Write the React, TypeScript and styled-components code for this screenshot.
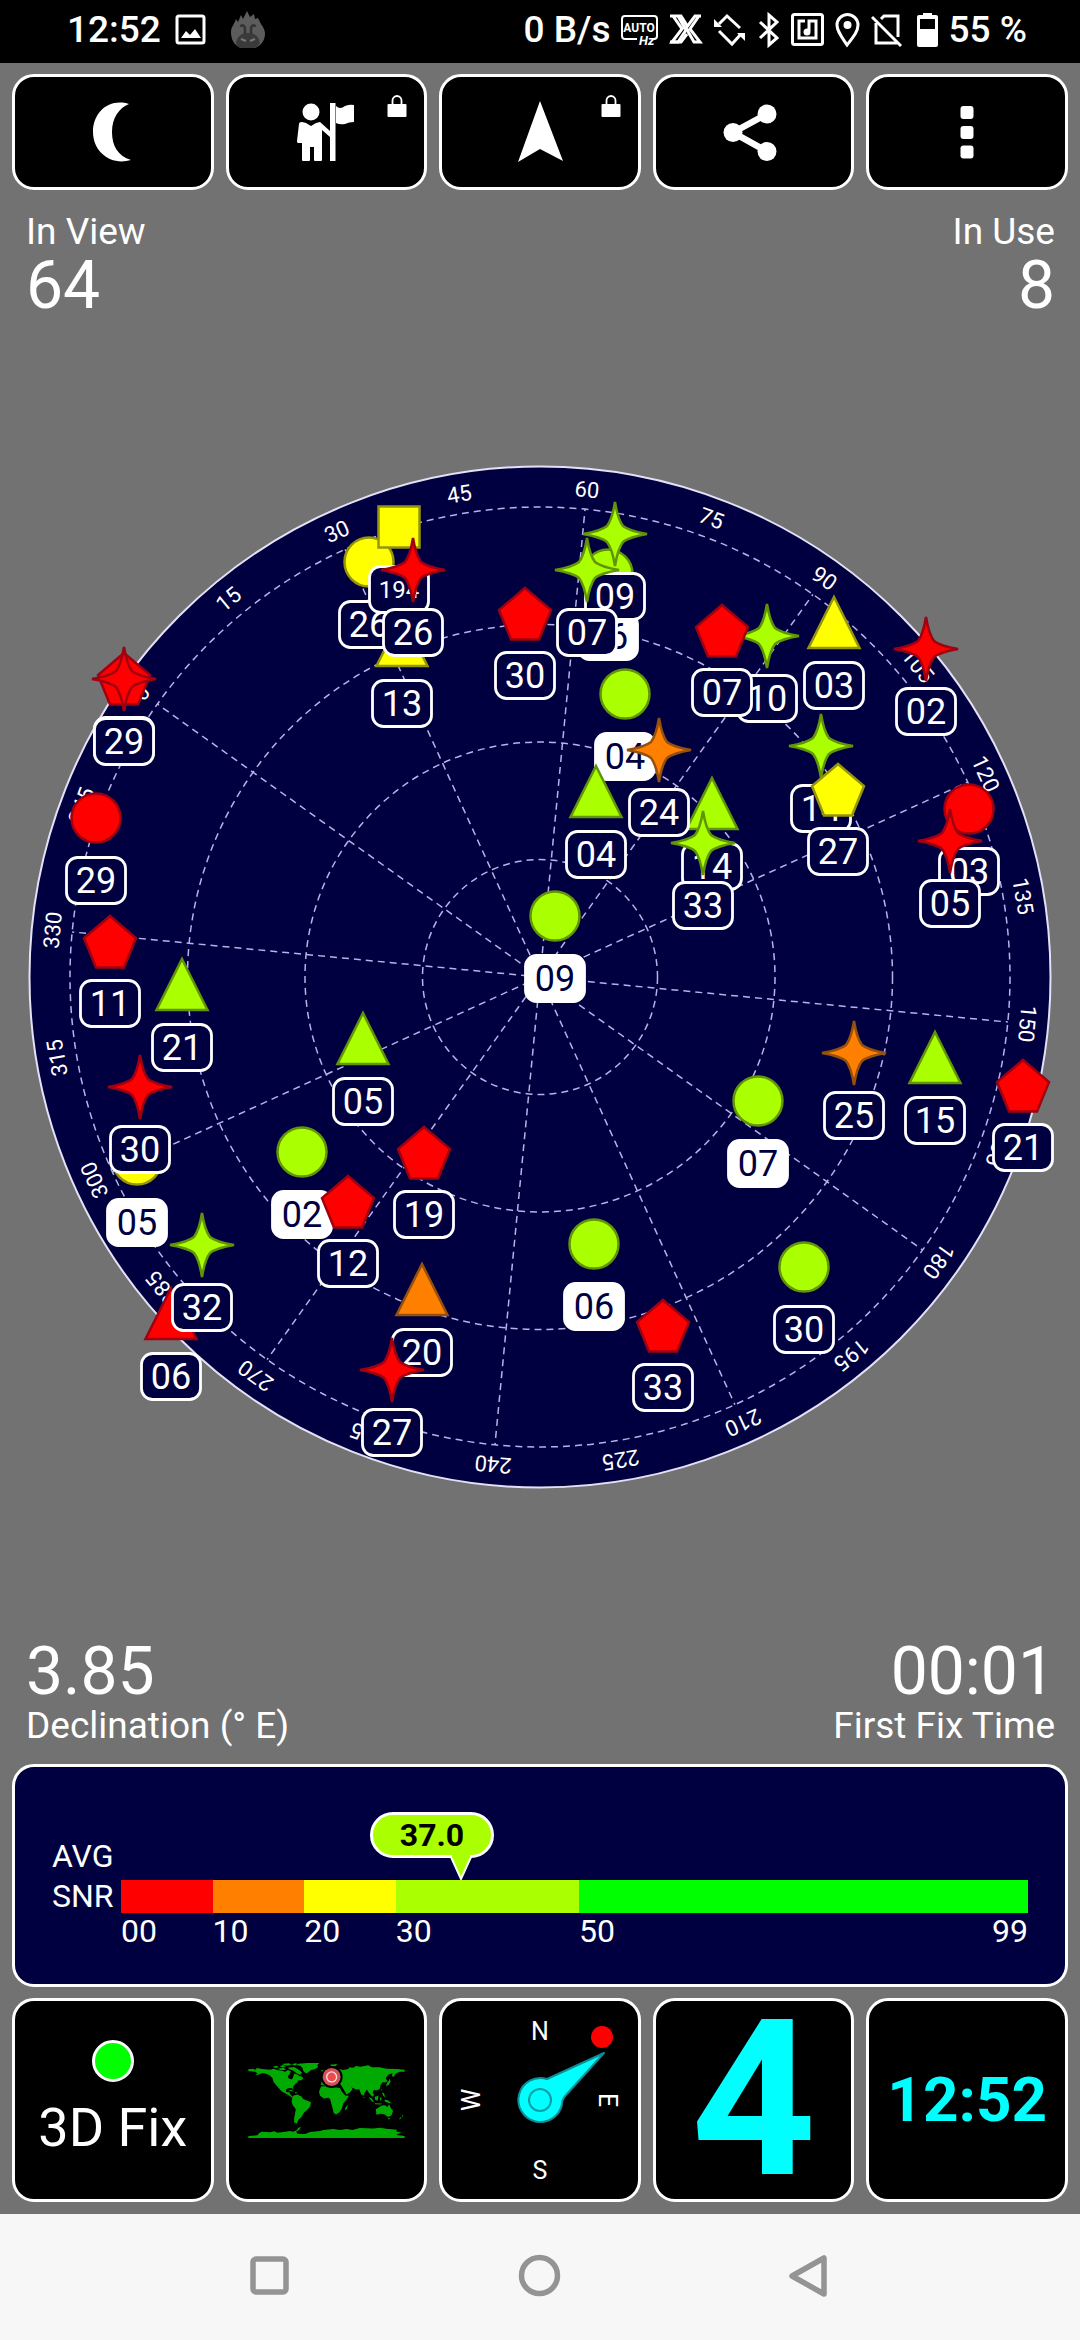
import React from "react";
import styled, { createGlobalStyle } from "styled-components";

const NAVY = "#000040";
const CYAN = "#00ffff";
const FONT = 'Roboto, "Noto Sans", sans-serif';

const GlobalStyle = createGlobalStyle`
  * { box-sizing: border-box; }
  body {
    margin: 0;
    background: #727272;
    color: #fff;
    font-family: ${FONT};
  }
`;

const Screen = styled.div`
  display: flex;
  flex-direction: column;
  min-height: 100vh;
`;

/* ---------- status bar ---------- */

const StatusBar = styled.header`
  display: flex;
  justify-content: space-between;
  align-items: center;
  height: 63px;
  padding: 0 53px 3px 67px;
  background: #000;
  font-size: 37px;
  font-weight: 500;
  line-height: 44px;
`;

const StatusGroup = styled.div<{ $gap: number }>`
  display: flex;
  align-items: center;
  gap: ${(p) => p.$gap}px;
  white-space: nowrap;
`;

const StatusIcon = ({ width, children }: { width: number; children: React.ReactNode }) => (
  <svg width={width} height={38} viewBox={`0 0 ${width} 38`} fill="none" stroke="#fff" strokeWidth={3} aria-hidden="true">
    {children}
  </svg>
);

/* ---------- shared rows and boxes ---------- */

const Main = styled.main`
  flex: 1;
  display: flex;
  flex-direction: column;
  padding: 11px 0 12px;
`;

const FiveColumns = styled.div`
  display: grid;
  grid-template-columns: repeat(5, minmax(0, 1fr));
  gap: 12px;
  padding: 0 12px;
`;

const BoxButton = styled.button<{ $height: number }>`
  position: relative;
  display: flex;
  flex-direction: column;
  align-items: center;
  justify-content: center;
  gap: 14px;
  height: ${(p) => p.$height}px;
  padding: 0;
  border: 3px solid #fff;
  border-radius: 22px;
  background: #000;
  color: #fff;
  font-family: inherit;
  white-space: nowrap;
`;

const LockBadge = styled.svg`
  position: absolute;
  top: 18px;
  right: 17px;
`;

const Lock = () => (
  <LockBadge width={20} height={22} viewBox="0 0 20 22" aria-hidden="true">
    <rect x="0.500" y="9" width="19" height="13" rx="1" fill="#fff" />
    <path d="M5.500 10V5.500a4.500 4.500 0 0 1 9 0V10" fill="none" stroke="#fff" strokeWidth="1.800" />
  </LockBadge>
);

const ToolIcon = ({ children }: { children: React.ReactNode }) => (
  <svg width={64} height={64} viewBox="0 0 64 64" fill="#fff" aria-hidden="true">
    {children}
  </svg>
);

/* ---------- statistics ---------- */

const StatRow = styled.section`
  display: flex;
  justify-content: space-between;
  padding: 20px 25px 16px 26px;
`;

const Stat = styled.div<{ $end?: boolean }>`
  display: flex;
  flex-direction: column;
  text-align: ${(p) => (p.$end ? "right" : "left")};
`;

const StatLabel = styled.span`
  font-size: 37px;
  line-height: 44px;
`;

const StatValue = styled.span`
  font-size: 66px;
  line-height: 64px;
`;

/* ---------- sky plot ---------- */

const SkyArea = styled.section`
  flex: 1;
  display: flex;
  align-items: center;
  justify-content: center;
`;

const SkySvg = styled.svg`
  display: block;
  width: 100%;
  height: auto;
`;

const DashedLine = styled.line`
  stroke: #b8b3e6;
  stroke-width: 1.5;
  stroke-dasharray: 7 5;
`;

const DashedRing = styled.circle`
  fill: none;
  stroke: #b8b3e6;
  stroke-width: 1.5;
  stroke-dasharray: 7 5;
`;

const BearingText = styled.text`
  fill: #fff;
  font-size: 22px;
  text-anchor: middle;
`;

const BadgeText = styled.text<{ $small: boolean; $used: boolean }>`
  fill: ${(p) => (p.$used ? NAVY : "#fff")};
  font-size: ${(p) => (p.$small ? 24 : 36)}px;
  text-anchor: middle;
`;

const CX = 540;
const CY = 977;
const RING = 117.5;
const HEADING = 54.5;

const onDial = (bearing: number, r: number) => {
  const a = ((bearing - HEADING) * Math.PI) / 180;
  return { x: CX + r * Math.sin(a), y: CY - r * Math.cos(a) };
};

type Shape = "circle" | "triangle" | "pentagon" | "star" | "square";
type Tone = "red" | "orange" | "yellow" | "lime";

const TONES: Record<Tone, [string, string]> = {
  red: ["#ff0000", "#a00010"],
  orange: ["#ff8000", "#94500c"],
  yellow: ["#ffff00", "#95950c"],
  lime: ["#aaff00", "#629408"],
};

type Satellite = [Shape, Tone, string, number, number, boolean?];

const SATELLITES: Satellite[] = [
  ["circle", "yellow", "26", 369, 562],
  ["triangle", "yellow", "13", 402, 641],
  ["square", "yellow", "194", 399, 527],
  ["star", "red", "26", 413, 570],
  ["pentagon", "red", "30", 525, 613],
  ["circle", "lime", "16", 608, 574, true],
  ["star", "lime", "09", 615, 534],
  ["star", "lime", "07", 587, 570],
  ["pentagon", "red", "29", 124, 678],
  ["star", "red", "29", 124, 679],
  ["circle", "red", "29", 96, 818],
  ["pentagon", "red", "11", 110, 941],
  ["triangle", "lime", "21", 182, 985],
  ["circle", "yellow", "05", 137, 1160, true],
  ["star", "red", "30", 140, 1087],
  ["triangle", "red", "06", 171, 1314],
  ["star", "lime", "32", 202, 1245],
  ["triangle", "lime", "05", 363, 1039],
  ["circle", "lime", "02", 302, 1152, true],
  ["pentagon", "red", "12", 348, 1201],
  ["pentagon", "red", "19", 424, 1152],
  ["triangle", "orange", "20", 422, 1290],
  ["star", "red", "27", 392, 1370],
  ["circle", "lime", "09", 555, 916, true],
  ["circle", "lime", "06", 594, 1244, true],
  ["pentagon", "red", "33", 663, 1325],
  ["circle", "lime", "07", 758, 1101, true],
  ["circle", "lime", "30", 804, 1267],
  ["star", "orange", "25", 854, 1053],
  ["triangle", "lime", "15", 935, 1058],
  ["pentagon", "red", "21", 1023, 1085],
  ["circle", "red", "03", 969, 809],
  ["star", "red", "05", 950, 841],
  ["star", "lime", "14", 821, 746],
  ["pentagon", "yellow", "27", 838, 789],
  ["circle", "lime", "04", 625, 694, true],
  ["triangle", "lime", "04", 596, 792],
  ["triangle", "lime", "14", 712, 804],
  ["star", "orange", "24", 659, 750],
  ["star", "lime", "33", 703, 843],
  ["star", "lime", "10", 767, 636],
  ["pentagon", "red", "07", 722, 630],
  ["triangle", "yellow", "03", 834, 623],
  ["star", "red", "02", 926, 649],
];

const OUTLINES: Record<Exclude<Shape, "circle">, string> = {
  triangle: "M0-26L25.500 25H-25.500Z",
  pentagon: "M0-25L26-3L14 26.500H-14L-26-3Z",
  star: "M0-32C2-20 4-13 8-8C13-4 20-2 32 0C20 2 13 4 8 8C4 13 2 20 0 32C-2 20-4 13-8 8C-13 4-20 2-32 0C-20-2-13-4-8-8C-4-13-2-20 0-32Z",
  square: "M-20.500-20.500H20.500V20.500H-20.500Z",
};

const Marker = ({ sat }: { sat: Satellite }) => {
  const [shape, tone, id, x, y, used = false] = sat;
  const [fill, stroke] = TONES[tone];
  return (
    <g transform={`translate(${x} ${y})`}>
      {shape === "circle" ? (
        <circle r={24.5} fill={fill} stroke={stroke} strokeWidth={2.5} />
      ) : (
        <path d={OUTLINES[shape]} fill={fill} stroke={stroke} strokeWidth={2.5} />
      )}
      <rect x={-29.5} y={39.5} width={59} height={46} rx={11} fill={used ? "#fff" : NAVY} stroke="#fff" strokeWidth={2.8} />
      <BadgeText $small={id.length > 2} $used={used} y={id.length > 2 ? 71 : 75}>
        {id}
      </BadgeText>
    </g>
  );
};

const bearings = Array.from({ length: 24 }, (_, i) => i * 15);

const SkyPlot = () => (
  <SkySvg viewBox="0 457 1080 1040" role="img" aria-label="Satellites in view">
    <circle cx={CX} cy={CY} r={510.5} fill={NAVY} stroke="#e4e0f6" strokeWidth={2} />
    {[1, 2, 3, 4].map((n) => (
      <DashedRing key={n} cx={CX} cy={CY} r={RING * n} />
    ))}
    {bearings
      .filter((b) => b % 30 === 0)
      .map((b) => {
        const end = onDial(b, RING * 4);
        return <DashedLine key={b} x1={CX} y1={CY} x2={end.x} y2={end.y} />;
      })}
    {bearings.map((b) => {
      const p = onDial(b, 482);
      return (
        <BearingText key={b} transform={`translate(${p.x} ${p.y}) rotate(${b - HEADING})`}>
          {b}
        </BearingText>
      );
    })}
    {SATELLITES.map((sat, i) => (
      <Marker key={i} sat={sat} />
    ))}
  </SkySvg>
);

/* ---------- signal gauge ---------- */

const GaugePanel = styled.section`
  display: grid;
  grid-template-columns: 69px 1fr;
  margin: 0 12px 11px;
  padding: 69px 37px 38px 37px;
  border: 3px solid #fff;
  border-radius: 22px;
  background: ${NAVY};
  font-size: 32px;
`;

const GaugeLabel = styled.span`
  line-height: 40px;
`;

const Track = styled.div`
  grid-column: 2;
  position: relative;
  align-self: center;
  display: flex;
  height: 33px;
`;

const Segment = styled.div<{ $span: number; $color: string }>`
  flex: ${(p) => p.$span} 1 0;
  background: ${(p) => p.$color};
`;

const Scale = styled.div`
  grid-column: 2;
  display: flex;
  line-height: 30px;
`;

const Tick = styled.span<{ $span: number }>`
  flex: ${(p) => p.$span} 1 0;
  display: flex;
  justify-content: space-between;
`;

const Pointer = styled.div`
  position: absolute;
  bottom: 100%;
  width: 0;
  height: 68px;
`;

const Bubble = styled.output`
  position: absolute;
  top: 0;
  right: -34px;
  width: 124px;
  border: 3px solid #fff;
  border-radius: 23px;
  background: #aaff00;
  color: #000;
  font-size: 32px;
  font-weight: 700;
  line-height: 40px;
  text-align: center;
`;

const BubbleTip = styled.svg`
  position: absolute;
  left: -11px;
  bottom: 0;
`;

const BANDS = [
  { from: "00", span: 10, color: "#ff0000" },
  { from: "10", span: 10, color: "#ff8000" },
  { from: "20", span: 10, color: "#ffff00" },
  { from: "30", span: 20, color: "#aaff00" },
  { from: "50", to: "99", span: 49, color: "#00ff00" },
];

const AVG_SNR = 37;

const Gauge = () => (
  <GaugePanel>
    <GaugeLabel>AVG</GaugeLabel>
    <span />
    <GaugeLabel>SNR</GaugeLabel>
    <Track>
      {BANDS.map((b) => (
        <Segment key={b.from} $span={b.span} $color={b.color} />
      ))}
      <Pointer style={{ left: `${(AVG_SNR / 99) * 100}%` }}>
        <Bubble>{AVG_SNR.toFixed(1)}</Bubble>
        <BubbleTip width={24} height={25} viewBox="0 0 24 25" aria-hidden="true">
          <path d="M2 2L12 24L22 2" fill="#aaff00" stroke="#fff" strokeWidth="2" />
          <rect x="3" y="0" width="18" height="3" fill="#aaff00" />
        </BubbleTip>
      </Pointer>
    </Track>
    <Scale>
      {BANDS.map((b) => (
        <Tick key={b.from} $span={b.span}>
          <span>{b.from}</span>
          {b.to && <span>{b.to}</span>}
        </Tick>
      ))}
    </Scale>
  </GaugePanel>
);

/* ---------- bottom tiles ---------- */

const FixLamp = styled.span`
  width: 42px;
  height: 42px;
  border: 3px solid #fff;
  border-radius: 50%;
  background: #00ff00;
`;

const FixText = styled.span`
  font-size: 54px;
  line-height: 64px;
`;

const BigDigit = styled.span`
  color: ${CYAN};
  font-size: 218px;
  font-weight: 700;
  line-height: 200px;
`;

const ClockText = styled.span`
  color: ${CYAN};
  font-size: 62px;
  font-weight: 700;
  line-height: 64px;
`;

const CompassText = styled.text`
  fill: #fff;
  font-size: 25px;
  text-anchor: middle;
`;

const WorldMap = () => (
  <svg width={157} height={75} viewBox="84 101 471 226" fill="#00aa00" role="img" aria-label="World map">
    <path d="M84 120L100 118L104 122L110 116L125 119L150 121L160 118L172 122L185 124L195 127L203 122L212 126L208 136L203 140L205 147L215 151L219 143L222 133L232 136L238 141L243 141L250 148L243 153L234 154L232 158L225 165L219 172L218 180L214 176L204 177L198 180L197 188L204 190L207 186L209 194L217 203L222 205L218 207L207 199L195 192L184 186L176 177L168 168L160 158L157 147L148 138L135 133L126 131L118 135L104 138L112 133L105 127L84 125Z" />
    <path d="M226 106L236 103L262 101H298L292 107L294 114L285 119L272 123L264 130L257 132L250 126L247 115L240 109Z" />
    <path d="M158 112L170 109L176 114L164 116ZM178 110L190 107L196 112L186 114ZM184 104L206 102L214 106L200 109ZM172 118L190 115L198 121L184 123ZM203 115L222 113L236 121L246 130L240 137L228 131L220 124L208 120ZM214 105L230 101L226 109Z" />
    <path d="M203 182L214 182L222 187L214 186ZM224 188L233 191L226 193ZM303 123L314 121L316 127L307 129ZM330 106L352 104L346 111L334 110Z" />
    <path d="M219 200L232 196L245 203L248 209L258 213L273 219L270 232L262 242L252 250L244 264L235 272L230 283L222 280L222 268L225 252L227 240L218 228L214 217Z" />
    <path d="M303 172L322 170L345 174L360 176L366 188L376 199L387 200L380 211L370 223L366 238L358 250L348 256L341 252L338 238L334 224L331 211L326 206L312 208L300 200L297 188ZM377 234L384 227L381 240L375 243Z" />
    <path d="M330 138L338 122L352 118L370 122L385 119L388 114L400 115L408 110L422 112L445 108L456 114L480 114L500 118L530 119L555 121V127L540 127L528 133L522 143L517 140L518 132L506 136L498 146L503 155L497 160L489 158L482 168L480 179L470 184L462 182L459 190L463 198L458 203L448 192L441 181L435 190L431 200L424 195L418 180L409 181L398 176L392 170L398 180L390 190L380 196L373 184L366 172L362 165L345 165L318 170L302 166L306 154L322 150Z" />
    <path d="M502 160L508 154L509 148L513 156L508 166L499 172ZM484 182L487 178L487 184ZM446 203L456 208L463 219L456 217ZM465 203L476 200L474 215L466 212ZM464 222L486 223L484 226L466 225ZM480 206L486 205L482 217ZM487 190L493 192L496 204L490 200ZM494 211L506 214L516 223L505 221L496 218ZM432 202L435 206L431 207Z" />
    <path d="M468 240L480 233L489 228L498 229L503 234L508 225L514 238L520 246L515 259L504 264L495 256L484 254L470 257ZM504 267H511L508 272ZM549 256L551 260L546 265ZM543 264L546 267L537 271Z" />
    <path d="M84 321L112 319L116 313L124 308L150 310L162 307L172 311L196 308L210 306L218 308L230 304L234 297L242 293L238 302L228 308L232 314L255 315L270 309L300 306L310 303L340 300L360 303L380 300L398 303L420 297L460 298L480 296L500 299L532 302L530 308L545 310L530 318L555 321V327H84Z" />
    <circle cx={335} cy={143} r={33} fill="#000" />
    <circle cx={335} cy={143} r={27} fill="#d25258" />
    <circle cx={335} cy={143} r={15} fill="#ee4a4e" stroke="#ffdede" strokeWidth={4} />
  </svg>
);

const Compass = () => (
  <svg width={190} height={190} viewBox="-95 -95 190 190" role="img" aria-label="Compass">
    <CompassText y={-60}>N</CompassText>
    <CompassText y={79}>S</CompassText>
    <CompassText transform="translate(59 0) rotate(90)">E</CompassText>
    <CompassText transform="translate(-60 0) rotate(-90)">W</CompassText>
    <circle cx={62} cy={-63} r={11} fill="#ff0000" />
    <path
      d="M64-47L7-21A22 22 0 1 0 22 4Q22-1 26-5Z"
      fill={CYAN}
      stroke="#0a8f96"
      strokeWidth={2}
      strokeLinejoin="round"
    />
    <circle r={11} fill="none" stroke="#0a9fa6" strokeWidth={2} />
  </svg>
);

/* ---------- navigation bar ---------- */

const NavBar = styled.nav`
  display: grid;
  grid-template-columns: repeat(3, 1fr);
  height: 126px;
  padding: 0 12.5% 3px;
  background: #f7f7f7;
`;

const NavButton = styled.button`
  display: flex;
  align-items: center;
  justify-content: center;
  padding: 0;
  border: 0;
  background: none;
`;

const NavIcon = ({ children }: { children: React.ReactNode }) => (
  <svg width={44} height={44} viewBox="0 0 44 44" fill="none" stroke="#949494" strokeWidth={5.5} aria-hidden="true">
    {children}
  </svg>
);

export default function App() {
  return (
    <Screen>
      <GlobalStyle />
      <StatusBar>
        <StatusGroup $gap={14}>
          <span>12:52</span>
          <StatusIcon width={31}>
            <rect x="2" y="5" width="27" height="27" rx="2" />
            <path d="M6 27L11 20L15 24L20 18L26 27Z" fill="#fff" stroke="none" />
          </StatusIcon>
          <svg width={56} height={38} viewBox="0 0 56 38" aria-hidden="true">
            <path
              d="M21 37C13 34 11 27 11 21C11 16 14 14 16 8L18 11L21 4L23 8L27 0L30 6L34 3L35 8L38 7L41 13C44 17 45 20 45 23C45 29 41 35 35 37Z"
              fill="#5c5c5c"
            />
            <path d="M16 32C17 25 22 22 28 22S39 25 40 32C38 35 36 37 34 37H22C19 37 17 35 16 32Z" fill="#3a3a3a" />
            <path d="M25 23V18C25 14 21 13 21 16M31 23V18C31 14 35 13 35 16" fill="none" stroke="#333" strokeWidth="2.500" />
            <path d="M21 28L26 30M35 28L30 30" stroke="#777" strokeWidth="2" />
          </svg>
        </StatusGroup>
        <StatusGroup $gap={10}>
          <span>0 B/s</span>
          <StatusIcon width={37}>
            <path d="M16 28H4Q1 28 1 25V8Q1 5 4 5H33Q36 5 36 8V25Q36 28 33 28" strokeWidth="2" />
            <text x="18" y="21" fontSize="12" fontWeight="700" textAnchor="middle" fill="#fff" stroke="none">
              AUTO
            </text>
            <text x="18" y="34" fontSize="13" fontWeight="700" fontStyle="italic" fill="#fff" stroke="none">
              Hz
            </text>
          </StatusIcon>
          <StatusIcon width={35}>
            <path d="M2 5H13L20 16M5 5L14 18L4 31H10L18 19L10 5" strokeWidth="3" />
            <path d="M33 5H27L18 17L26 31H32L22 18L31 5M2 31H13L19 23" strokeWidth="3" />
          </StatusIcon>
          <StatusIcon width={34}>
            <path d="M6 13L14 5L27 17M28 23L19 33L6 20" />
            <path d="M1 8V16H9ZM32 30V22H24Z" fill="#fff" stroke="none" />
          </StatusIcon>
          <StatusIcon width={24}>
            <path d="M3 11L20 27L12 34V4L20 11L3 27" strokeWidth="3" />
          </StatusIcon>
          <StatusIcon width={33}>
            <rect x="1.500" y="3.500" width="30" height="30" rx="2" />
            <path d="M14 10H8V27H25V10H18V20" strokeWidth="3" />
            <circle cx="16" cy="21" r="2" fill="#fff" />
          </StatusIcon>
          <StatusIcon width={27}>
            <path d="M13 34C7 25 3 20 3 14A10.500 10.500 0 0 1 24 14C24 20 20 25 13 34Z" />
            <circle cx="13.500" cy="14" r="4" fill="#fff" stroke="none" />
          </StatusIcon>
          <StatusIcon width={35}>
            <path d="M10 8L13 5H27V26M5 12V32H26" />
            <path d="M1 6L30 35" />
          </StatusIcon>
          <StatusIcon width={23}>
            <path d="M1 6Q1 4 3 4H7V2H16V4H20Q22 4 22 6V34Q22 36 20 36H3Q1 36 1 34Z" fill="#fff" stroke="none" />
            <rect x="4" y="8" width="15" height="10" fill="#000" stroke="none" />
          </StatusIcon>
          <span>55 %</span>
        </StatusGroup>
      </StatusBar>

      <Main>
        <FiveColumns>
          <BoxButton $height={116} aria-label="Night mode">
            <ToolIcon>
              <path d="M48 4C28-2 12 12 12 32C12 52 30 66 50 60C37 56 31 46 31 32C31 18 38 8 48 4Z" />
            </ToolIcon>
          </BoxButton>
          <BoxButton $height={116} aria-label="Guide">
            <ToolIcon>
              <circle cx="17" cy="12" r="8.500" />
              <path d="M36 3H41.500V61H36V37L28 30V60Q28 61 27 61H21Q20 61 20 60V47H16V60Q16 61 15 61H9Q8 61 8 60V43H4Q3 43 3 41L5 24Q5 22 8 22L12 23L17 26L22 23L26 22L36 31Z" />
              <path d="M42 6Q46 10 51 6Q56 4 60 5V22Q55 22 51 24Q46 25 42 23Z" />
            </ToolIcon>
            <Lock />
          </BoxButton>
          <BoxButton $height={116} aria-label="Navigate">
            <ToolIcon>
              <path d="M32 1L55 61L32 49L10 62Z" />
            </ToolIcon>
            <Lock />
          </BoxButton>
          <BoxButton $height={116} aria-label="Share">
            <ToolIcon>
              <circle cx="45" cy="14" r="9.500" />
              <circle cx="11" cy="32.500" r="9.500" />
              <circle cx="45" cy="51.500" r="9.500" />
              <path d="M45 14L11 32.500L45 51.500" fill="none" stroke="#fff" strokeWidth="6.500" />
            </ToolIcon>
          </BoxButton>
          <BoxButton $height={116} aria-label="More options">
            <ToolIcon>
              <rect x="25.500" y="6" width="13" height="13" rx="3" />
              <rect x="25.500" y="26" width="13" height="13" rx="3" />
              <rect x="25.500" y="45.500" width="13" height="13" rx="3" />
            </ToolIcon>
          </BoxButton>
        </FiveColumns>

        <StatRow>
          <Stat>
            <StatLabel>In View</StatLabel>
            <StatValue>64</StatValue>
          </Stat>
          <Stat $end>
            <StatLabel>In Use</StatLabel>
            <StatValue>8</StatValue>
          </Stat>
        </StatRow>

        <SkyArea>
          <SkyPlot />
        </SkyArea>

        <StatRow>
          <Stat>
            <StatValue>3.85</StatValue>
            <StatLabel>Declination (° E)</StatLabel>
          </Stat>
          <Stat $end>
            <StatValue>00:01</StatValue>
            <StatLabel>First Fix Time</StatLabel>
          </Stat>
        </StatRow>

        <Gauge />

        <FiveColumns>
          <BoxButton $height={204}>
            <FixLamp />
            <FixText>3D Fix</FixText>
          </BoxButton>
          <BoxButton $height={204}>
            <WorldMap />
          </BoxButton>
          <BoxButton $height={204}>
            <Compass />
          </BoxButton>
          <BoxButton $height={204}>
            <BigDigit>4</BigDigit>
          </BoxButton>
          <BoxButton $height={204}>
            <ClockText>12:52</ClockText>
          </BoxButton>
        </FiveColumns>
      </Main>

      <NavBar>
        <NavButton aria-label="Recent apps">
          <NavIcon>
            <rect x="5" y="5" width="33" height="33" rx="3" />
          </NavIcon>
        </NavButton>
        <NavButton aria-label="Home">
          <NavIcon>
            <circle cx="21.500" cy="21.500" r="18" />
          </NavIcon>
        </NavButton>
        <NavButton aria-label="Back">
          <NavIcon>
            <path d="M4 22L36 4V40Z" strokeLinejoin="round" />
          </NavIcon>
        </NavButton>
      </NavBar>
    </Screen>
  );
}
